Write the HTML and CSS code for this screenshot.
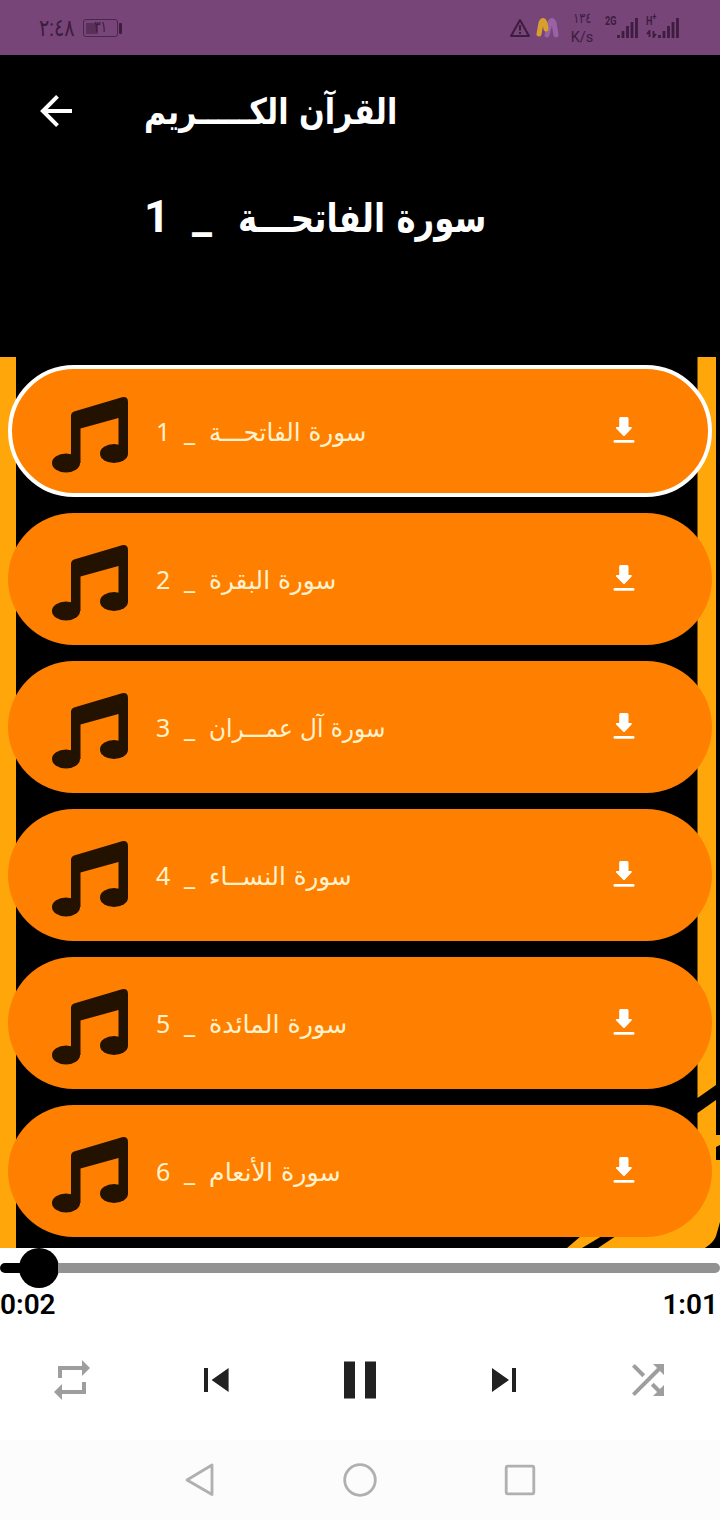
FILE: index.html
```html
<!DOCTYPE html>
<html lang="ar">
	<head>
		<meta charset="utf-8">
		<title>القرآن الكريم</title>
		<link rel="stylesheet" href="styles.css">
	</head>
	<body>

		<svg class="defs">
			<symbol id="note" viewBox="0 0 76 76">
				<ellipse cx="14" cy="66" rx="14" ry="9.500" />
				<ellipse cx="62" cy="56.500" rx="14" ry="9.500" />
				<path d="M19 66V19q0-3.500 3-4.500L70 .3Q76-.8 76 5v52h-9.500V21L28.500 31.500V66z" />
			</symbol>
			<symbol id="download" viewBox="0 0 22 26">
				<path d="M7.500 0h6.500q1.500 0 1.500 1.500V10h2.700q1.200.3.400 1.400L12 18.500q-1 1-2 0L3.100 11.400Q2.300 10.300 3.500 10h2.700V1.500q0-1.500 1.300-1.500z" />
				<rect x="0.500" y="23" width="21" height="2.800" rx="1.400" />
			</symbol>
		</svg>

		<div class="status">
			<span class="clock"><span>٢:٤٨</span></span>
			<span class="battery"><i></i><b>٣١</b></span>
			<svg class="warn" width="22" height="20" viewBox="0 0 22 20">
				<path d="M11 2L20 18H2z" />
				<path d="M11 7v5.500M11 14v2" />
			</svg>
			<svg class="logo" width="24" height="22" viewBox="0 0 24 22">
				<path class="logo-b" d="M11 18L14 6q2-5 4 0l2 12" />
				<path class="logo-a" d="M3 17L5 6q2-5 4 0l1 6" />
			</svg>
			<span class="speed"><b>١٣٤</b><b>K/s</b></span>
			<span class="net"><b>2G</b></span>
			<svg class="signal" width="22" height="22" viewBox="0 0 22 22">
				<path d="M1.500 18v3M6 14v7M10.500 9v12M15 5v16M19.500 1v20" />
			</svg>
			<span class="net hplus"><b>H<sup>+</sup></b>
				<svg width="12" height="8" viewBox="0 0 12 8">
					<path d="M3.500 7V1L1 4M7.500 1v6l2.500-3" />
				</svg>
			</span>
			<svg class="signal" width="22" height="22" viewBox="0 0 22 22">
				<path d="M1.500 18v3M6 14v7M10.500 9v12M15 5v16M19.500 1v20" />
			</svg>
		</div>

		<div class="header">
			<div class="bar">
				<svg class="back" width="32" height="32" viewBox="0 0 32 32">
					<path d="M32 16H3M17.500 1.400L2.900 16l14.600 14.600" />
				</svg>
				<h1><span class="ar">القرآن الكـــــريم</span></h1>
			</div>
			<div class="now">
				<span class="num">1</span>
				<span class="dash">_</span>
				<span class="ar">سورة الفاتحـــة</span>
			</div>
		</div>

		<div class="list">
			<svg class="frame" width="720" height="891" viewBox="0 357 720 891">
				<path d="M0 357H16V1248H0zM697.500 357H716V1085L697.500 1098zM697.500 1113L716 1100V1135H720V1145L716 1147V1160H720V1222L716 1236Q714 1242 705 1248H598L616 1236 697.500 1170zM567 1248L581 1236H602L582 1248z" />
			</svg>
			<div class="item active">
				<svg class="note"><use href="#note" /></svg>
				<span class="num">1</span>
				<span class="dash">_</span>
				<span class="name"><span class="ar n1">سورة الفاتحـــة</span></span>
				<svg class="download"><use href="#download" /></svg>
			</div>
			<div class="item">
				<svg class="note"><use href="#note" /></svg>
				<span class="num">2</span>
				<span class="dash">_</span>
				<span class="name"><span class="ar n2">سورة البقرة</span></span>
				<svg class="download"><use href="#download" /></svg>
			</div>
			<div class="item">
				<svg class="note"><use href="#note" /></svg>
				<span class="num">3</span>
				<span class="dash">_</span>
				<span class="name"><span class="ar n3">سورة آل عمـــران</span></span>
				<svg class="download"><use href="#download" /></svg>
			</div>
			<div class="item">
				<svg class="note"><use href="#note" /></svg>
				<span class="num">4</span>
				<span class="dash">_</span>
				<span class="name"><span class="ar n4">سورة النســاء</span></span>
				<svg class="download"><use href="#download" /></svg>
			</div>
			<div class="item">
				<svg class="note"><use href="#note" /></svg>
				<span class="num">5</span>
				<span class="dash">_</span>
				<span class="name"><span class="ar n5">سورة المائدة</span></span>
				<svg class="download"><use href="#download" /></svg>
			</div>
			<div class="item">
				<svg class="note"><use href="#note" /></svg>
				<span class="num">6</span>
				<span class="dash">_</span>
				<span class="name"><span class="ar n6">سورة الأنعام</span></span>
				<svg class="download"><use href="#download" /></svg>
			</div>
		</div>

		<div class="player">
			<div class="seek">
				<span class="played"></span>
				<span class="thumb"></span>
				<span class="rest"></span>
			</div>
			<div class="times">
				<span>0:02</span>
				<span>1:01</span>
			</div>
			<div class="controls">
				<svg class="off" width="48" height="48" viewBox="0 0 24 24">
					<path d="M7 7h10v3l4-4-4-4v3H5v6h2zM17 17H7v-3l-4 4 4 4v-3h12v-6h-2z" />
				</svg>
				<svg width="48" height="48" viewBox="0 0 24 24">
					<path d="M6 6h2v12H6zM9.800 12l8.500 6V6z" />
				</svg>
				<svg width="96" height="96" viewBox="0 0 96 96">
					<path d="M32 29.500h11v37H32zM53 29.500h11v37H53z" />
				</svg>
				<svg width="48" height="48" viewBox="0 0 24 24">
					<path d="M6 18l8.500-6L6 6zM16 6v12h2V6z" />
				</svg>
				<svg class="off" width="48" height="48" viewBox="0 0 24 24">
					<path d="M10.590 9.170L5.410 4 4 5.410l5.170 5.170zM14.500 4l2.040 2.040L4 18.590 5.410 20 17.960 7.460 20 9.500V4zM14.830 13.410l-1.410 1.410 3.130 3.130L14.500 20H20v-5.500l-2.040 2.040z" />
				</svg>
			</div>
		</div>

		<div class="nav">
			<svg width="36" height="36" viewBox="0 0 36 36">
				<path d="M30 3V32.500L5 18z" />
			</svg>
			<svg width="36" height="36" viewBox="0 0 36 36">
				<circle cx="18" cy="18" r="15.300" />
			</svg>
			<svg width="36" height="36" viewBox="0 0 36 36">
				<rect x="4.200" y="4.200" width="27.600" height="27.600" rx="1.500" />
			</svg>
		</div>

	</body>
</html>
```
FILE: styles.css
```css
*{
	box-sizing: border-box;
}

body{
	margin:0;
	width:720px;
	height:1520px;
	overflow: hidden;
	background-color: #000;
	font-family: Roboto, "DejaVu Sans", sans-serif;
}

svg{
	display: block;
	flex:none;
}

.defs{
	display: none;
}

.ar{
	display: inline-block;
	direction: rtl;
	white-space: nowrap;
	font-family: "DejaVu Sans", sans-serif;
	transform-origin: 0 50%;
}

/* 状态栏 */
.status{
	display: flex;
	align-items: center;
	height:55px;
	padding-left:39px;
	background-color: #774577;
	color:#3d1c40;
}

.clock{
	width:44px;
	font-size: 24px;
	line-height: 28px;
	direction: ltr;
	unicode-bidi: bidi-override;
	white-space: nowrap;
}

.clock span{
	display: inline-block;
	transform: scaleX(.8);
	transform-origin: 0 50%;
}

.battery{
	position: relative;
	width:35px;
	height:18px;
	border:1.5px solid #4a264c;
	border-radius: 3px;
	font-size: 16px;
	line-height: 14px;
	text-align: center;
}

.battery i{
	position: absolute;
	left:2px;
	top:3px;
	width:12px;
	height:11px;
	background-color: #58305a;
}

.battery:after{
	content:"";
	position: absolute;
	right:-5px;
	top:3px;
	width:3px;
	height:11px;
	border-radius: 1px;
	background-color: #3d1c40;
}

.battery b{
	display: inline-block;
	font-weight: normal;
	transform: scaleX(.75);
}

.warn{
	margin-left:391px;
	fill:none;
	stroke:#3d1c40;
	stroke-width: 2;
	stroke-linejoin: round;
}

.logo{
	margin-left:5px;
	fill:none;
	stroke-width: 5;
	stroke-linecap: round;
}

.logo-a{
	stroke:#d7a02c;
}

.logo-b{
	stroke:#9a62a6;
}

.speed{
	display: flex;
	flex-direction: column;
	align-items: center;
	width:24px;
	margin-left:10px;
	font-size: 14.5px;
	line-height: 19px;
}

.speed b{
	font-weight: normal;
}

.speed b:first-child{
	font-size: 14px;
	transform: scaleX(.8);
}

.net{
	align-self: flex-start;
	width:12px;
	margin:15px 0 0 11px;
	font-size: 13px;
	line-height: 12px;
}

.net b{
	display: inline-block;
	transform: scaleX(.7);
	transform-origin: 0 50%;
}

.net sup{
	font-size: 10px;
	line-height: 0;
}

.net svg{
	margin-top:3px;
	fill:none;
	stroke:#3d1c40;
	stroke-width: 1.8;
}

.signal{
	fill:none;
	stroke:#3d1c40;
	stroke-width: 2.800;
}

.hplus{
	margin-left:7px;
	white-space: nowrap;
}

/* 标题 */
.header{
	height:302px;
	color:#fff;
}

.bar{
	display: flex;
	align-items: center;
	height:112px;
	padding-left:40px;
}

.back{
	fill:none;
	stroke:#fff;
	stroke-width: 4;
}

.bar h1{
	margin:2px 0 0 72px;
	font-size: 36px;
	line-height: 50px;
}

.bar .ar{
	transform: scaleX(.838);
}

.now{
	display: flex;
	align-items: baseline;
	height:80px;
	padding-left:144px;
	font-size: 45px;
	line-height: 100px;
	font-weight: bold;
}

.now .num{
	width:48px;
}

.now .dash{
	width:46px;
}

.now .ar{
	font-size: 40px;
	transform: scaleX(.81);
}

/* 列表 */
.list{
	position: relative;
	display: flex;
	flex-direction: column;
	gap:16px;
	height:891px;
	padding:8px 8px 0;
	overflow: hidden;
}

.frame{
	position: absolute;
	left:0;
	top:0;
	fill:#ffa60a;
}

.item{
	position: relative;
	flex:none;
	display: flex;
	align-items: center;
	height:132px;
	padding:0 77px 0 44px;
	border-radius: 66px;
	background-color: #ff8000;
	color:#fff3cf;
	font-family: "Noto Sans", sans-serif;
	font-size: 25px;
}

.active{
	border:4px solid #fff;
	padding:0 73px 0 40px;
}

.note{
	width:76px;
	height:76px;
	margin-top:7px;
	fill:#241200;
}

.item .num{
	width:28px;
	margin-left:28px;
}

.item .dash{
	width:25px;
}

.name{
	flex:1;
}

.name .ar{
	font-size: 25px;
}

/* 各行文字的宽度微调 */
.n1{
	transform: scaleX(.982);
}

.n2{
	transform: scaleX(.99);
}

.n3{
	transform: scaleX(.926);
}

.n4{
	transform: scaleX(.98);
}

.n5,.n6{
	transform: scaleX(1.01);
}

.download{
	width:22px;
	height:26px;
	margin-top:-2px;
	fill:#fff;
}

/* 播放器 */
.player{
	height:192px;
	background-color: #fff;
	color:#000;
}

.seek{
	display: flex;
	align-items: center;
	height:40px;
}

.played{
	width:20px;
	height:10px;
	margin-right:-1px;
	border-radius: 5px 0 0 5px;
	background-color: #000;
}

.thumb{
	width:40px;
	height:40px;
	border-radius: 50%;
	background-color: #000;
}

.rest{
	flex:1;
	height:10px;
	margin-left:-1px;
	border-radius: 0 5px 5px 0;
	background-color: #929292;
}

.times{
	display: flex;
	justify-content: space-between;
	height:32px;
	padding:0 2px 0 0;
	font-size: 28px;
	line-height: 33px;
	font-weight: 600;
}

.controls{
	display: grid;
	grid-template-columns: repeat(5, 1fr);
	place-items: center;
	height:120px;
	fill:#212121;
}

.off{
	fill:#9e9e9e;
}

.nav{
	display: flex;
	justify-content: center;
	align-items: center;
	gap:124px;
	height:80px;
	background-color: #fcfcfc;
	fill:none;
	stroke:#b0b0b0;
	stroke-width: 2.800;
	stroke-linejoin: round;
}
```
